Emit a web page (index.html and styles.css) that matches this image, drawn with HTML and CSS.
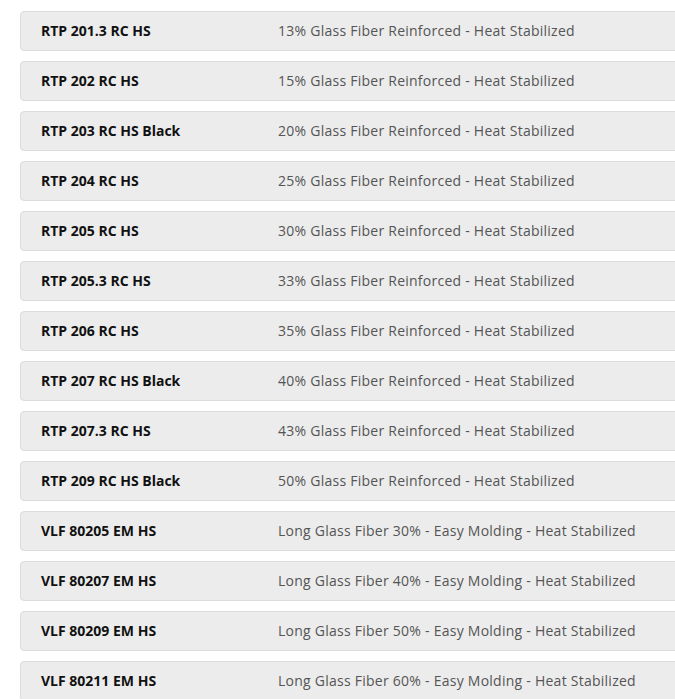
FILE: index.html
```html
<!DOCTYPE html>
<html lang="en">
<head>
    <meta charset="UTF-8" />
    <meta name="viewport" content="width=device-width, initial-scale=1.0"/>
    <title>Grades</title>
    <link rel="stylesheet" href="styles.css">
</head>
<body>

<div class="grade-list">
    <div class="grade-row"><span class="grade-name">RTP 201.3 RC HS</span><span class="grade-desc">13% Glass Fiber Reinforced - Heat Stabilized</span></div>
    <div class="grade-row"><span class="grade-name">RTP 202 RC HS</span><span class="grade-desc">15% Glass Fiber Reinforced - Heat Stabilized</span></div>
    <div class="grade-row"><span class="grade-name">RTP 203 RC HS Black</span><span class="grade-desc">20% Glass Fiber Reinforced - Heat Stabilized</span></div>
    <div class="grade-row"><span class="grade-name">RTP 204 RC HS</span><span class="grade-desc">25% Glass Fiber Reinforced - Heat Stabilized</span></div>
    <div class="grade-row"><span class="grade-name">RTP 205 RC HS</span><span class="grade-desc">30% Glass Fiber Reinforced - Heat Stabilized</span></div>
    <div class="grade-row"><span class="grade-name">RTP 205.3 RC HS</span><span class="grade-desc">33% Glass Fiber Reinforced - Heat Stabilized</span></div>
    <div class="grade-row"><span class="grade-name">RTP 206 RC HS</span><span class="grade-desc">35% Glass Fiber Reinforced - Heat Stabilized</span></div>
    <div class="grade-row"><span class="grade-name">RTP 207 RC HS Black</span><span class="grade-desc">40% Glass Fiber Reinforced - Heat Stabilized</span></div>
    <div class="grade-row"><span class="grade-name">RTP 207.3 RC HS</span><span class="grade-desc">43% Glass Fiber Reinforced - Heat Stabilized</span></div>
    <div class="grade-row"><span class="grade-name">RTP 209 RC HS Black</span><span class="grade-desc">50% Glass Fiber Reinforced - Heat Stabilized</span></div>
    <div class="grade-row"><span class="grade-name">VLF 80205 EM HS</span><span class="grade-desc">Long Glass Fiber 30% - Easy Molding - Heat Stabilized</span></div>
    <div class="grade-row"><span class="grade-name">VLF 80207 EM HS</span><span class="grade-desc">Long Glass Fiber 40% - Easy Molding - Heat Stabilized</span></div>
    <div class="grade-row"><span class="grade-name">VLF 80209 EM HS</span><span class="grade-desc">Long Glass Fiber 50% - Easy Molding - Heat Stabilized</span></div>
    <div class="grade-row"><span class="grade-name">VLF 80211 EM HS</span><span class="grade-desc">Long Glass Fiber 60% - Easy Molding - Heat Stabilized</span></div>
</div>

</body>
</html>
```

FILE: styles.css
```css
* {
    box-sizing: border-box;
}

html, body {
    overflow: hidden;
}

body {
    margin: 0;
    padding: 11px 0 0 20px;
    background-color: #ffffff;
    font-family: 'Open Sans', sans-serif;
    font-size: 14px;
}

.grade-list {
    display: flex;
    flex-direction: column;
    gap: 10px;
    width: 720px;
}

.grade-row {
    display: flex;
    align-items: center;
    height: 40px;
    padding: 0 0 2px 20px;
    background-color: #ececec;
    border: 1px solid #dcdcdc;
    border-radius: 4px;
}

.grade-name {
    flex: 0 0 237px;
    font-weight: 700;
    color: #111111;
}

.grade-desc {
    color: #555555;
    letter-spacing: 0.25px;
}
```
